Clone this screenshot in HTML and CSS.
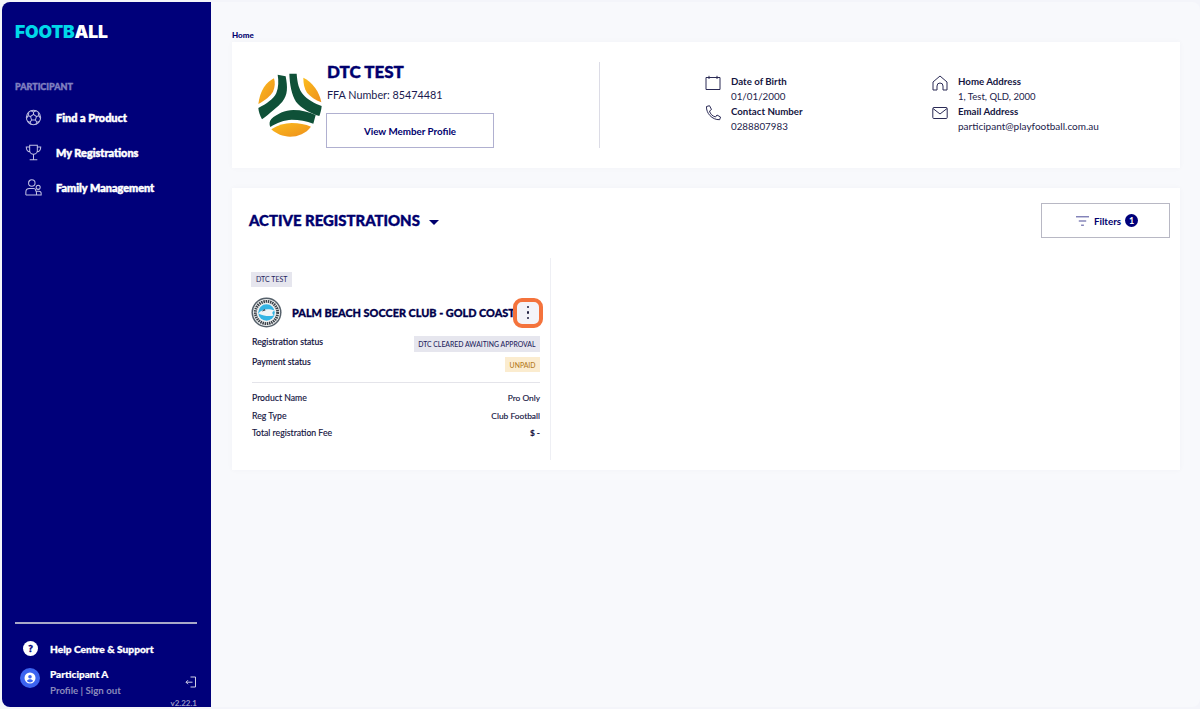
FILE: index.html
```html
<!DOCTYPE html>
<html lang="en">
<head>
<meta charset="utf-8">
<title>Football</title>
<link rel="stylesheet" href="styles.css">
</head>
<body>
<div class="app">
  <aside class="sidebar">
    <div class="logo"><span class="logo-a">FOOTB</span><span class="logo-b">ALL</span></div>
    <div class="section-label">PARTICIPANT</div>
    <nav class="nav">
      <a class="nav-item"><svg class="nav-icon" viewBox="0 0 20 20" fill="none" stroke="#c0c0e4" stroke-width="1.2"><circle cx="10" cy="10" r="8.400"/><path d="M10 6.300l3.500 2.600-1.300 4.100H7.800L6.500 8.900zM10 6.300V3.500l-3-1.300M10 3.500l3-1.300M13.500 8.900l3-1 1.300 2.600M16.500 7.900l-1-3M12.200 13l1.800 2.500-1.200 2.300M14 15.500l3-.7M7.800 13L6 15.500l1.200 2.300M6 15.500l-3-.7M6.500 8.900l-3-1-1.300 2.600M3.500 7.900l1-3"/></svg><span>Find a Product</span></a>
      <a class="nav-item"><svg class="nav-icon" viewBox="0 0 20 20" fill="none" stroke="#c0c0e4" stroke-width="1.200"><path d="M5.500 1.500h9v6a4.500 4.500 0 0 1-9 0zM5.500 3.500H1.500c0 3.500 1.500 5.500 4.500 6M14.500 3.500h4c0 3.500-1.500 5.500-4.500 6M10 12v6.500M5.500 18.500h9"/></svg><span>My Registrations</span></a>
      <a class="nav-item"><svg class="nav-icon" viewBox="0 0 20 20" fill="none" stroke="#c0c0e4" stroke-width="1.200"><circle cx="8" cy="4.800" r="3.800"/><circle cx="15.500" cy="9.800" r="2.400"/><path d="M1 18.800v-3.300c0-2.500 1.800-4.300 4.200-4.300h4.600c1.500 0 2.700.7 3.300 2M1 18.800h12.500v-2.500c0-1.700-.7-2.500-1.500-3M13.500 18.800H19v-2c0-1.400-1.100-2.500-2.500-2.500h-3"/></svg><span>Family Management</span></a>
    </nav>
    <div class="sidebar-foot">
      <div class="help"><span class="help-icon">?</span><span>Help Centre &amp; Support</span></div>
      <div class="user">
        <span class="avatar"><svg viewBox="0 0 12 12" width="12" height="12"><circle cx="6" cy="6" r="5.500" fill="#fff"/><circle cx="6" cy="4.700" r="1.800" fill="#3c64f0"/><path d="M2.800 9c.7-1.300 1.800-1.800 3.200-1.800S8.500 7.700 9.200 9a4.300 4.300 0 0 1-6.400 0z" fill="#3c64f0"/></svg></span>
        <div class="user-text">
          <div class="user-name">Participant A</div>
          <div class="user-links">Profile | Sign out</div>
        </div>
        <svg class="signout" viewBox="0 0 12 12" fill="none" stroke="#d0d0e4" stroke-width="1"><path d="M5.500 1h5v10h-5M7.500 6.200H1M3 4.200l-2 2 2 2"/></svg>
      </div>
      <div class="version">v2.22.1</div>
    </div>
  </aside>
  <main class="main">
    <div class="crumb">Home</div>
    <section class="card profile">
      <div class="profile-left">
        <svg class="ball" viewBox="24 25 192 192">
          <defs>
            <linearGradient id="gold" x1="0" y1="0" x2="1" y2="1">
              <stop offset="0" stop-color="#fbbd1e"/>
              <stop offset="1" stop-color="#ee8f1c"/>
            </linearGradient>
          </defs>
          <path d="M72 41C48 53 30 78 25 118c19-11 37-24 44-37 6-13 7-28 3-40z" fill="url(#gold)"/>
          <path d="M160 39c26 12 48 41 54 74-18-7-33-17-43-29-8-12-11-28-11-45z" fill="url(#gold)"/>
          <path d="M64 194c20-13 41-19 61-19 22 0 41 4 58 11-15 20-39 30-63 30-21 0-41-8-56-22z" fill="url(#gold)"/>
          <path d="M83 30l24 5c6 32 7 56-10 76-14 16-38 35-61 53-6-11-10-22-11-34 25-13 46-27 54-45 7-17 7-37 4-55z" fill="#0f5138"/>
          <path d="M118 27h22c2 28 7 48 20 63 12 14 35 27 55 34-1 11-3 20-7 30-27-8-56-24-70-43-13-20-19-52-20-84z" fill="#0f5138"/>
          <path d="M64 163c17-16 41-26 66-27 25 0 48 6 67 15l-7 26c-20-8-42-12-65-12-22 1-45 9-64 22-4-8-3-17 3-24z" fill="#0f5138"/>
        </svg>
        <div class="profile-id">
          <h1 class="profile-name">DTC TEST</h1>
          <div class="profile-num">FFA Number: 85474481</div>
          <button class="btn profile-btn">View Member Profile</button>
        </div>
      </div>
      <div class="profile-info">
        <div class="info-col">
          <div class="info-item"><svg class="info-icon" viewBox="0 0 16 16" fill="none" stroke="#2a2a55" stroke-width="1"><path d="M1 2.500h14v12H1zM4 .8v3.200M12 .8v3.200"/></svg><div><div class="info-label">Date of Birth</div><div class="info-val">01/01/2000</div></div></div>
          <div class="info-item"><svg class="info-icon" viewBox="0 0 16 16" fill="none" stroke="#2a2a55" stroke-width="1"><path d="M1.500 1.500l3-.8 2 3.800-2 1.500c.8 3 2.700 5 6 6l1.500-2 3.500 2-.8 2.700C7 15 1 8 1.500 1.500z" stroke-linejoin="round"/></svg><div><div class="info-label">Contact Number</div><div class="info-val">0288807983</div></div></div>
        </div>
        <div class="info-col">
          <div class="info-item"><svg class="info-icon" viewBox="0 0 16 16" fill="none" stroke="#2a2a55" stroke-width="1"><path d="M1 15V7l7-6 7 6v8h-4v-4a3 3 0 0 0-6 0v4z" stroke-linejoin="round"/></svg><div><div class="info-label">Home Address</div><div class="info-val info-addr">1, Test, QLD, 2000</div></div></div>
          <div class="info-item"><svg class="info-icon" viewBox="0 0 16 16" fill="none" stroke="#2a2a55" stroke-width="1"><rect x=".8" y="2.500" width="14.400" height="11" rx="1"/><path d="M1 3.500l7 5.500 7-5.500"/></svg><div><div class="info-label">Email Address</div><div class="info-val info-small">participant@playfootball.com.au</div></div></div>
        </div>
      </div>
    </section>
    <section class="card regs">
      <div class="regs-head">
        <h2 class="regs-title">ACTIVE REGISTRATIONS<span class="caret"></span></h2>
        <button class="btn filter-btn"><svg class="filter-icon" viewBox="0 0 14 12" fill="none" stroke="#3c3c90" stroke-width="1"><path d="M0 1.500h14M3 6h8M5.500 10.500h3"/></svg>Filters<span class="count">1</span></button>
      </div>
      <article class="reg">
        <span class="tag">DTC TEST</span>
        <div class="club">
          <svg class="club-logo" viewBox="0 0 32 32"><circle cx="16" cy="16" r="15.500" fill="#55606a"/><circle cx="16" cy="16" r="14" fill="#eef0f0"/><circle cx="16" cy="16" r="11.500" fill="none" stroke="#3a4048" stroke-width="3" stroke-dasharray="1.500 .8"/><circle cx="16" cy="16" r="8.500" fill="#35b4e4"/><path d="M7.500 17c3-4 9-6 17-3-3 1-3 3-1 5-5 1-9 1-16-2z" fill="#f2f4f6"/><path d="M11 15l3-3 1 2z" fill="#4a5058"/></svg>
          <span class="club-name">PALM BEACH SOCCER CLUB - GOLD COAST</span>
          <span class="kebab"><i></i><i></i><i></i></span>
        </div>
        <div class="row row-status"><span>Registration status</span><span class="pill pill-grey">DTC CLEARED AWAITING APPROVAL</span></div>
        <div class="row row-status"><span>Payment status</span><span class="pill pill-orange">UNPAID</span></div>
        <div class="details">
          <div class="row row-detail"><span>Product Name</span><span class="val">Pro Only</span></div>
          <div class="row row-detail"><span>Reg Type</span><span class="val">Club Football</span></div>
          <div class="row row-detail"><span>Total registration Fee</span><span class="val fee">$ -</span></div>
        </div>
      </article>
    </section>
  </main>
</div>
</body>
</html>
```
FILE: styles.css
```css
* { box-sizing: border-box; }
html, body { margin: 0; height: 100%; }
body {
  background: #f4f5fa;
  font-family: Lato, "Open Sans", sans-serif;
  color: #00006e;
  overflow: hidden;
}
.app {
  display: flex;
  height: 709px;
  padding: 2px 0 2px 2px;
}
.sidebar {
  width: 209px;
  flex: none;
  background: #00007a;
  border-radius: 8px 0 0 8px;
  padding: 21px 13px 0;
  display: flex;
  flex-direction: column;
  color: #fff;
}
.logo {
  font-family: Inter, sans-serif;
  font-weight: 900;
  font-size: 17.500px;
  line-height: 18px;
  letter-spacing: -.2px;
}
.logo-a { color: #00d8e8; }
.logo-b { color: #fff; }
.section-label {
  margin-top: 39px;
  font-size: 9px;
  line-height: 14px;
  font-weight: 900;
  color: #8080c0;
  -webkit-text-stroke: .4px #8080c0;
}
.nav {
  margin-top: 13px;
  display: flex;
  flex-direction: column;
  gap: 15px;
}
.nav-item {
  display: flex;
  align-items: center;
  height: 20px;
  padding-left: 10px;
  gap: 14px;
  font-size: 10.900px;
  font-weight: 900;
  color: #fff;
  -webkit-text-stroke: .5px #fff;
}
.nav-icon { width: 17px; height: 17px; flex: none; }
.sidebar-foot {
  margin-top: auto;
  border-top: 2px solid #a8a8c8;
  margin-right: 1px;
  padding-top: 16px;
  position: relative;
  height: 85px;
}
.help {
  display: flex;
  align-items: center;
  gap: 12px;
  padding-left: 8px;
  font-size: 10.200px;
  font-weight: 900;
  height: 17px;
  -webkit-text-stroke: .3px #fff;
}
.help-icon {
  width: 15px;
  height: 15px;
  border-radius: 50%;
  background: #fff;
  color: #00007a;
  font-size: 10px;
  line-height: 15px;
  text-align: center;
  -webkit-text-stroke: .4px #00007a;
}
.user {
  display: flex;
  align-items: flex-start;
  margin-top: 10px;
  padding-left: 5px;
}
.avatar {
  width: 20px;
  height: 20px;
  border-radius: 50%;
  background: #3c64f0;
  display: flex;
  align-items: center;
  justify-content: center;
  flex: none;
  margin-top: 1px;
}
.user-text { margin-left: 10px; font-size: 10px; }
.user-name { font-weight: 900; line-height: 15px; -webkit-text-stroke: .2px #fff; }
.user-links { color: #8a8abc; font-size: 9.700px; line-height: 15px; margin-top: 1px; font-weight: 700; }
.signout { width: 12px; height: 12px; margin-left: auto; margin-top: 9px; margin-right: 0; }
.version {
  position: absolute;
  right: 0;
  bottom: -1px;
  font-size: 8px;
  color: #9a9ac4;
  font-weight: 700;
}
.main {
  flex: 1;
  min-width: 0;
  background: #f8f9fc;
  padding: 27px 20px 0 21px;
  border-radius: 0 8px 8px 0;
}
.crumb {
  font-size: 8px;
  line-height: 13px;
  font-weight: 900;
  color: #00006e;
}
.card {
  background: #fff;
  box-shadow: 0 0 6px rgba(30, 30, 90, .03);
}
.profile {
  height: 126px;
  display: flex;
  padding: 20px 0 20px 26px;
}
.profile-left {
  width: 342px;
  display: flex;
  align-items: flex-start;
  border-right: 1px solid #dcdce6;
}
.ball { width: 64px; height: 64px; margin-top: 11px; flex: none; }
.profile-id { margin-left: 5px; margin-top: 0; }
.profile-name {
  margin: 0;
  font-size: 17px;
  line-height: 20px;
  font-weight: 900;
  color: #00006e;
  -webkit-text-stroke: .4px #00006e;
}
.profile-num { font-size: 10.800px; line-height: 16px; margin-top: 5px; color: #1a1a50; }
.btn {
  background: #fff;
  font-family: inherit;
  color: #00006e;
  font-weight: 700;
  border: 1px solid #b0b0d0;
  cursor: pointer;
}
.profile-btn {
  width: 168px;
  height: 35px;
  margin-top: 10px;
  margin-left: -1px;
  font-size: 9.800px;
}
.profile-info {
  flex: 1;
  display: flex;
  padding-left: 105px;
  padding-top: 12px;
}
.info-col { width: 227px; display: flex; flex-direction: column; }
.info-item { display: flex; gap: 10px; }
.info-icon { width: 16px; height: 16px; flex: none; margin-top: 1px; }
.info-label { font-size: 9.700px; line-height: 15px; font-weight: 700; color: #15153f; }
.info-val { font-size: 9.800px; line-height: 15px; color: #22224a; }
.info-addr { font-size: 9.500px; }
.info-small { font-size: 10px; }
.regs {
  margin-top: 20px;
  height: 282px;
  padding: 15px 10px 0 17px;
}
.regs-head {
  display: flex;
  justify-content: space-between;
  align-items: flex-start;
}
.regs-title {
  margin: 0;
  padding-top: 6px;
  font-size: 14.900px;
  line-height: 22px;
  font-weight: 900;
  color: #00006e;
  -webkit-text-stroke: .4px #00006e;
}
.caret {
  display: inline-block;
  margin-left: 9px;
  vertical-align: middle;
  border: 5px solid transparent;
  border-top-color: #00006e;
  border-bottom: 0;
  -webkit-text-stroke: 0;
}
.filter-btn {
  width: 129px;
  height: 35px;
  padding-left: 9px;
  border-color: #b8b8c4;
  font-size: 9.800px;
  display: flex;
  align-items: center;
  justify-content: center;
}
.filter-icon { width: 13px; height: 12px; margin-right: 5px; }
.count {
  width: 13px;
  height: 13px;
  border-radius: 50%;
  background: #00007a;
  color: #fff;
  font-size: 9px;
  line-height: 13px;
  margin-left: 4px;
  text-align: center;
}
.reg {
  width: 302px;
  height: 202px;
  margin-top: 20px;
  padding: 14px 10px 0 3px;
  border-right: 1px solid #eeeff4;
}
.tag {
  display: inline-block;
  background: #e6e6ee;
  height: 15px;
  line-height: 15px;
  padding: 0 5px;
  margin-left: -1px;
  font-size: 7px;
  color: #1f1f60;
  vertical-align: top;
}
.club {
  display: flex;
  align-items: center;
  margin-top: 6px;
  height: 31px;
}
.club-logo { width: 31px; height: 31px; flex: none; margin-left: -1px; }
.club-name {
  margin-left: 10px;
  font-size: 10.900px;
  font-weight: 900;
  color: #00004a;
  white-space: nowrap;
  -webkit-text-stroke: .3px #00004a;
}
.kebab {
  width: 30px;
  height: 30px;
  margin-left: -2px;
  flex: none;
  border: 4px solid #f4733c;
  border-radius: 9px;
  background: #f4f4f8;
  display: flex;
  flex-direction: column;
  align-items: center;
  justify-content: center;
  gap: 3px;
  position: relative;
}
.kebab i { width: 2.500px; height: 2.500px; border-radius: 50%; background: #222240; }
.row {
  display: flex;
  justify-content: space-between;
  font-size: 8.700px;
  color: #15153f;
  -webkit-text-stroke: .15px #15153f;
}
.row-status { height: 20px; align-items: flex-start; font-weight: 500; }
.club + .row-status { margin-top: 8px; }
.pill { height: 16px; line-height: 16px; padding: 0 4.500px; font-size: 6.850px; -webkit-text-stroke: 0; }
.pill-grey { background: #e6e6ee; color: #1f1f60; }
.pill-orange { background: #fbeccf; color: #b57a20; height: 15px; margin-top: 1px; }
.details {
  margin-top: 6px;
  padding-top: 9px;
  border-top: 1px solid #e4e4ea;
}
.row-detail { height: 17.500px; align-items: flex-start; }
.val { margin-top: 1px; font-size: 8.400px; }
.fee { font-weight: 700; }
```
